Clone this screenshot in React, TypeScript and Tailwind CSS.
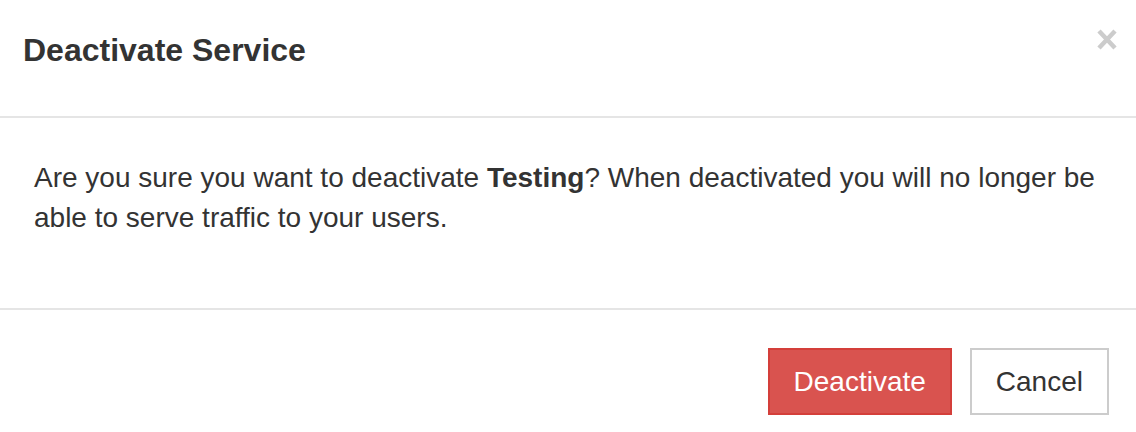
import React from "react";

export default function App() {
  const font = { fontFamily: '"Liberation Sans", Arial, Helvetica, sans-serif' };
  return (
    <div className="w-[1136px] h-[432px] bg-white text-[#333333] overflow-hidden" style={font}>
      <div className="h-[118px] border-b-2 border-[#e5e5e5] flex items-start justify-between">
        <h4 className="pl-[23px] pt-[33px] text-[32px] leading-[35px] font-bold">Deactivate Service</h4>
        <button className="mt-[29px] mr-[19px] w-[20px] h-[21px]" aria-label="Close">
          <svg width="20" height="21" viewBox="0 0 20 21">
            <path d="M2 2 L18 19 M18 2 L2 19" stroke="#cccccc" strokeWidth="4.5" fill="none" />
          </svg>
        </button>
      </div>
      <div className="h-[192px] border-b-2 border-[#e5e5e5] pl-[34px] pr-[26px] pt-[40px] text-[28px] leading-[40px]">
        <p>
          Are you sure you want to deactivate <b className="font-bold">Testing</b>? When deactivated you will no longer be able to serve traffic to your users.
        </p>
      </div>
      <div className="flex justify-end gap-[18px] pt-[38px] pr-[27px]">
        <button className="h-[67px] px-[24px] flex items-center border-2 border-[#d43f3a] bg-[#d9534f] text-white text-[28px] leading-[40px]">
          Deactivate
        </button>
        <button className="h-[67px] px-[24px] flex items-center border-2 border-[#cccccc] bg-white text-[#333333] text-[28px] leading-[40px]">
          Cancel
        </button>
      </div>
    </div>
  );
}
